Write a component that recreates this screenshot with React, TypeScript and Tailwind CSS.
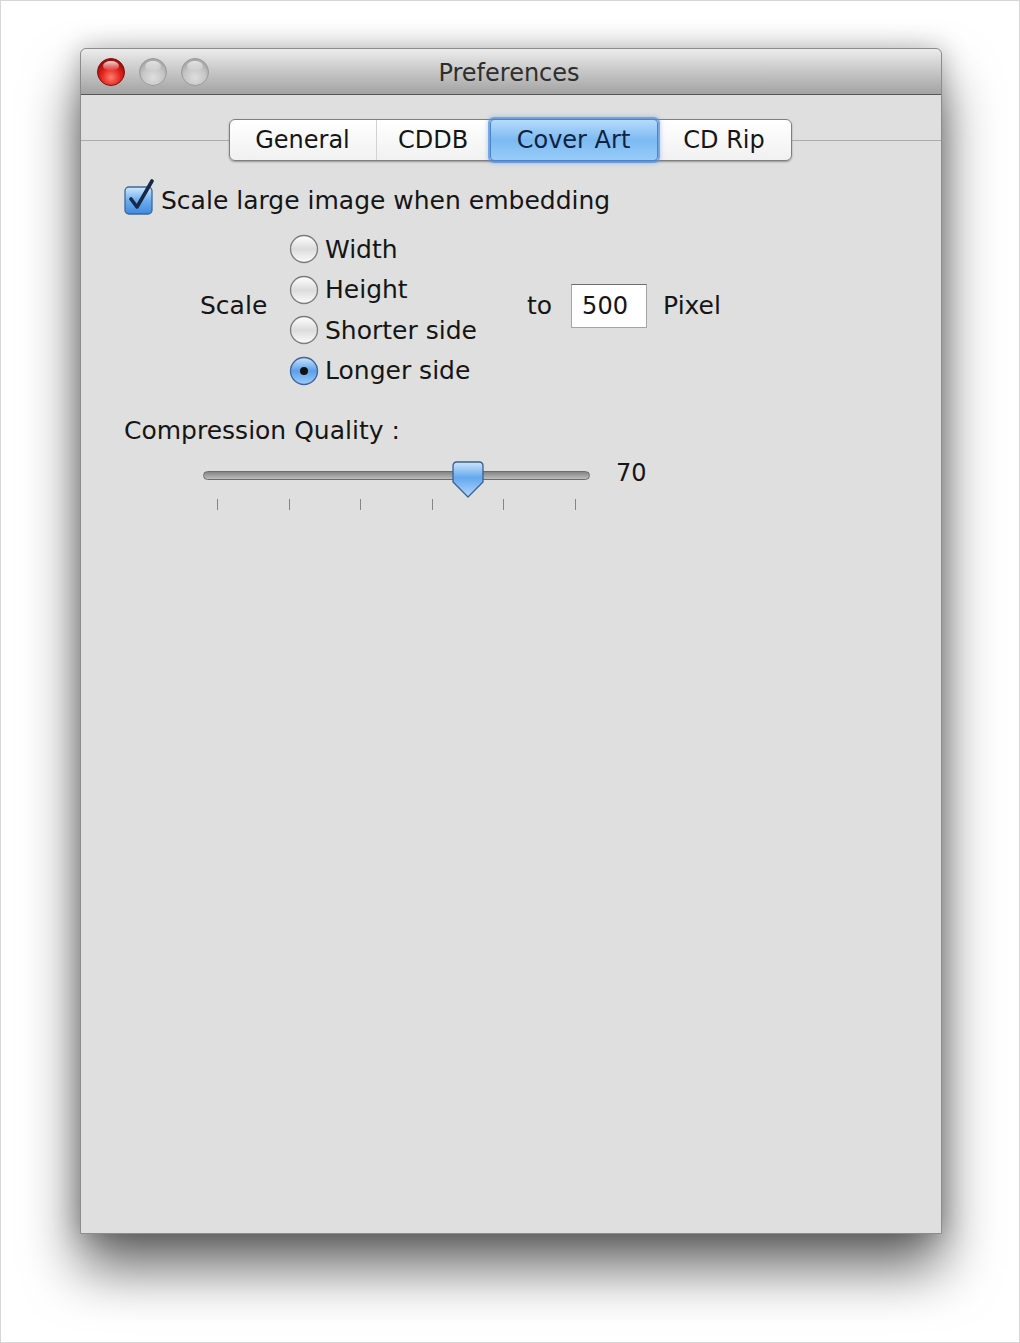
const font = "font-['DejaVu_Sans',sans-serif]";

function Light({ red }: { red?: boolean }) {
  const id = red ? 'lr' : 'lg';
  return (
    <svg width="30" height="30" viewBox="0 0 30 30">
      <defs>
        <radialGradient id={id + 'b'} cx="50%" cy="70%" r="60%">
          {red ? (
            <>
              <stop offset="0%" stopColor="#ff7d70" />
              <stop offset="60%" stopColor="#e3231b" />
              <stop offset="100%" stopColor="#a10d0b" />
            </>
          ) : (
            <>
              <stop offset="0%" stopColor="#dedede" />
              <stop offset="65%" stopColor="#c6c6c6" />
              <stop offset="100%" stopColor="#a9a9a9" />
            </>
          )}
        </radialGradient>
        <linearGradient id={id + 'h'} x1="0" y1="0" x2="0" y2="1">
          <stop offset="0%" stopColor="#ffffff" stopOpacity={red ? 0.85 : 0.7} />
          <stop offset="100%" stopColor="#ffffff" stopOpacity="0" />
        </linearGradient>
      </defs>
      <circle cx="15" cy="15" r="13.5" fill={`url(#${id}b)`} stroke={red ? '#7d1410' : '#9a9a9a'} strokeWidth="1" />
      <ellipse cx="15" cy="9" rx="8" ry="5" fill={`url(#${id}h)`} />
    </svg>
  );
}

function Checkbox() {
  return (
    <svg width="32" height="36" viewBox="0 0 32 36" className="-mt-[8px]">
      <defs>
        <linearGradient id="cb" x1="0" y1="0" x2="0" y2="1">
          <stop offset="0%" stopColor="#d2e8fc" />
          <stop offset="50%" stopColor="#6eaeee" />
          <stop offset="100%" stopColor="#4189de" />
        </linearGradient>
      </defs>
      <rect x="1" y="8" width="27" height="27" rx="4" fill="url(#cb)" stroke="#3c679c" strokeWidth="1.3" />
      <path d="M7 20 L13 28 L28 2" fill="none" stroke="#16294a" strokeWidth="3.6" strokeLinecap="round" strokeLinejoin="round" />
    </svg>
  );
}

function Radio({ on }: { on?: boolean }) {
  const id = on ? 'ron' : 'roff';
  return (
    <svg width="30" height="30" viewBox="0 0 30 30">
      <defs>
        <linearGradient id={id} x1="0" y1="0" x2="0" y2="1">
          {on ? (
            <>
              <stop offset="0%" stopColor="#cbe4fb" />
              <stop offset="50%" stopColor="#5a9fe9" />
              <stop offset="100%" stopColor="#9fcdf9" />
            </>
          ) : (
            <>
              <stop offset="0%" stopColor="#ffffff" />
              <stop offset="50%" stopColor="#dcdcdc" />
              <stop offset="100%" stopColor="#fbfbfb" />
            </>
          )}
        </linearGradient>
      </defs>
      <circle cx="15" cy="15" r="13.5" fill={`url(#${id})`} stroke={on ? '#3c649a' : '#7c7c7c'} strokeWidth="1.3" />
      {on && <circle cx="15" cy="15" r="4" fill="#111" />}
    </svg>
  );
}

function Thumb() {
  return (
    <svg width="32" height="38" viewBox="0 0 32 38">
      <defs>
        <linearGradient id="th" x1="0" y1="0" x2="0" y2="1">
          <stop offset="0%" stopColor="#cfe6fc" />
          <stop offset="45%" stopColor="#64a7ee" />
          <stop offset="100%" stopColor="#b2d8fb" />
        </linearGradient>
      </defs>
      <path d="M5 1 H27 Q31 1 31 5 V21 L16 36 L1 21 V5 Q1 1 5 1 Z" fill="url(#th)" stroke="#3b5f91" strokeWidth="1.3" strokeLinejoin="round" />
    </svg>
  );
}

const tabs = [
  { label: 'General', w: 'w-[146px]' },
  { label: 'CDDB', w: 'w-[114px]' },
  { label: 'Cover Art', w: 'w-[168px]', active: true },
  { label: 'CD Rip', w: 'w-[133px]' },
];

const options = ['Width', 'Height', 'Shorter side', 'Longer side'];

export default function App() {
  return (
    <div className={`w-[1020px] h-[1343px] bg-white border border-[#d6d6d6] pt-[47px] pl-[79px] ${font} text-[#151515]`}>
      <div className="w-[862px] h-[1186px] flex flex-col rounded-t-[6px] border border-[#8c8c8c] bg-[#dfdfdf] shadow-[0_34px_55px_rgba(0,0,0,0.6),0_0_26px_rgba(0,0,0,0.25)]">
        {/* title bar */}
        <div className="h-[46px] grid grid-cols-[1fr_auto_1fr] items-center rounded-t-[6px] bg-gradient-to-b from-[#ececec] to-[#a3a3a3] border-b border-[#555]">
          <div className="flex items-center gap-[12px] pl-[15px]">
            <Light red />
            <Light />
            <Light />
          </div>
          <div className="text-[24px] text-[#2e2e2e] -ml-[4px] mt-[2px]">Preferences</div>
          <div />
        </div>

        {/* tabs */}
        <div className="mt-[24px] flex items-center">
          <div className="flex-1 h-px bg-[#acacac]" />
          <div className="flex h-[42px] -ml-[2px] rounded-[6px] border border-[#7f7f7f] bg-gradient-to-b from-white to-[#f1f1f1] shadow-[0_1px_2px_rgba(0,0,0,0.35)]">
            {tabs.map((t, i) =>
              t.active ? (
                <div
                  key={t.label}
                  className={`${t.w} relative z-10 -my-[1px] flex items-center justify-center rounded-[4px] border border-[#4a83c6] bg-gradient-to-b from-[#b6dbfb] via-[#7cbaf2] to-[#98ccf8] text-[24px] text-[#10223e] shadow-[0_0_0_2px_rgba(85,145,220,0.7),0_0_5px_2px_rgba(85,145,220,0.45)]`}
                >
                  {t.label}
                </div>
              ) : (
                <div
                  key={t.label}
                  className={`${t.w} flex items-center justify-center text-[24px] ${i === 1 ? 'border-l border-[#d2d2d2]' : ''}`}
                >
                  {t.label}
                </div>
              )
            )}
          </div>
          <div className="flex-1 h-px bg-[#acacac]" />
        </div>

        <div className="pl-[43px] text-[25px]">
          {/* checkbox */}
          <div className="mt-[25px] h-[30px] flex items-center gap-[5px]">
            <Checkbox />
            <span>Scale large image when embedding</span>
          </div>

          {/* scale options */}
          <div className="mt-[13px] flex items-start">
            <div className="w-[165px] pl-[76px] mt-[62px] h-[30px] leading-[30px]">Scale</div>
            <div className="w-[238px] flex flex-col">
              {options.map((o, i) => (
                <div key={o} className="h-[40.5px] flex items-center gap-[6px]">
                  <Radio on={i === 3} />
                  <span>{o}</span>
                </div>
              ))}
            </div>
            <div className="mt-[55px] flex items-center h-[44px]">
              <span>to</span>
              <div className="ml-[19px] w-[76px] h-[44px] bg-white border border-[#a5a5a5] border-t-[#6e6e6e] flex items-center pl-[10px] text-[24px]">
                500
              </div>
              <span className="ml-[16px]">Pixel</span>
            </div>
          </div>

          {/* compression */}
          <div className="mt-[25px] h-[30px] leading-[30px]">Compression Quality :</div>
          <div className="mt-[9px] ml-[79px] flex items-center h-[40px]">
            <div className="relative w-[387px] h-[9px] rounded-full border border-[#6d6d6d] bg-gradient-to-b from-[#858585] to-[#bdbdbd]">
              <div className="absolute left-[248px] -top-[11px]">
                <Thumb />
              </div>
            </div>
            <span className="ml-[26px] text-[24px] -mt-[4px]">70</span>
          </div>
          <div className="ml-[93px] mt-[4px] w-[359px] h-[11px] flex justify-between">
            {Array.from({ length: 6 }).map((_, i) => (
              <div key={i} className="w-px h-full bg-[#858585]" />
            ))}
          </div>
        </div>
      </div>
    </div>
  );
}
